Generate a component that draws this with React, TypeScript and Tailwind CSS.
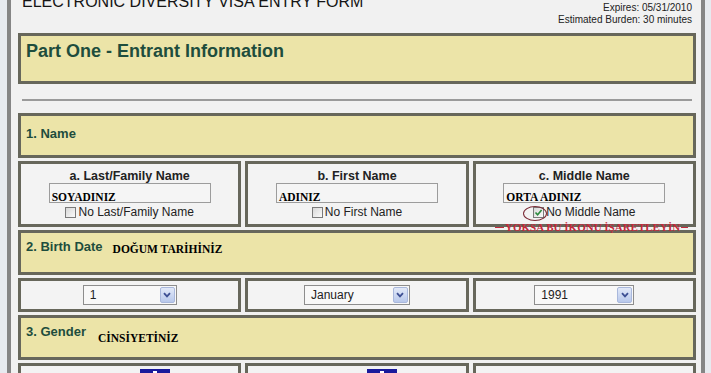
import React from "react";

const sans = "font-['Liberation_Sans',Arial,sans-serif]";
const serif = "font-['Liberation_Serif','Times_New_Roman',serif]";
const band = "border-[3px] border-[#67675b] bg-[#ece4a8]";
const cell = "border-[3px] border-[#67675b] bg-[#f3f3f3]";
const label = "text-[13px] font-bold leading-[16px] text-[#1e4d3d]";

function Check({ text, checked }: { text: string; checked?: boolean }) {
  return (
    <div className="flex items-center gap-[2px] h-[13px]">
      <span className="relative w-[11px] h-[11px] border border-[#7a7a7a] bg-gradient-to-br from-[#d8d8d8] to-[#fafafa] flex items-center justify-center">
        {checked && (
          <svg width="9" height="9" viewBox="0 0 9 9">
            <path d="M1.5 4.5 L3.6 6.8 L7.6 2" stroke="#2b8a3e" strokeWidth="1.6" fill="none" />
          </svg>
        )}
        {checked && (
          <span className="absolute left-[-11px] top-[-2px] w-[24px] h-[15px] rounded-[50%] border border-[#7a2a35]" />
        )}
      </span>
      <span className="text-[12px] leading-[13px] text-[#222]">{text}</span>
    </div>
  );
}

function NameCell({
  title,
  value,
  check,
  checked,
}: {
  title: string;
  value: string;
  check: string;
  checked?: boolean;
}) {
  return (
    <div className={`${cell} h-[66px] flex flex-col items-center pt-[5px]`}>
      <div className="text-[12.5px] font-bold leading-[14px] text-[#222]">{title}</div>
      <div className="w-[162px] h-[20px] border border-[#9c9c9c] bg-[#f5f5f5] flex items-end pl-[2px]">
        <span className={`${serif} text-[11.5px] font-bold leading-[10px] text-black`}>{value}</span>
      </div>
      <div className="mt-[3px]">
        <Check text={check} checked={checked} />
      </div>
    </div>
  );
}

function Select({ value, width }: { value: string; width: string }) {
  return (
    <div className={`${width} h-[20px] border border-[#8d8d8d] bg-[#f8f8f8] flex items-center justify-between pl-[6px] pr-[1px]`}>
      <span className="text-[12px] leading-[14px] text-[#222]">{value}</span>
      <div className="w-[15px] h-[16px] rounded-[2px] border border-[#a9b8dc] bg-gradient-to-b from-[#e2e9f8] to-[#b8c8eb] flex items-center justify-center">
        <svg width="8" height="6" viewBox="0 0 8 6">
          <path d="M1 1.2 L4 4.4 L7 1.2" stroke="#3d4f93" strokeWidth="1.8" fill="none" />
        </svg>
      </div>
    </div>
  );
}

function SelectCell({ value, width }: { value: string; width: string }) {
  return (
    <div className={`${cell} h-[34px] flex justify-center pt-[4px]`}>
      <Select value={value} width={width} />
    </div>
  );
}

function GenderCell({ icon }: { icon?: boolean }) {
  return (
    <div className={`${cell} h-[40px] flex justify-center pt-[3px]`}>
      {icon && (
        <div className="ml-[50px] w-[30px] h-[24px] bg-[#1a1a9c] flex justify-center pt-[2px]">
          <span className="w-[4px] h-[3px] bg-white" />
        </div>
      )}
    </div>
  );
}

export default function App() {
  return (
    <div className={`${sans} w-[711px] h-[373px] overflow-hidden flex items-start bg-[#f1f1f1]`}>
      <div className="w-[7px] h-full bg-[#e7eaef]" />
      <div className="w-[4px] h-full bg-[#858585]" />

      <div className="flex-1 min-w-0 pl-[7px] pr-[5px]">
        {/* Header */}
        <div className="h-[33px] flex justify-between items-start">
          <div className="ml-[4px] -mt-[6px] text-[16px] leading-[16px] text-[#151515]">
            ELECTRONIC DIVERSITY VISA ENTRY FORM
          </div>
          <div className="mr-[4px] pt-[2px] text-right text-[10px] leading-[12px] text-[#222]">
            <div>Expires: 05/31/2010</div>
            <div>Estimated Burden: 30 minutes</div>
          </div>
        </div>

        <div className={`${band} h-[51px] pl-[5px] pt-[4px]`}>
          <div className="text-[18px] font-bold leading-[22px] text-[#1e4d3d]">
            Part One - Entrant Information
          </div>
        </div>

        <div className="mt-[15px] mx-[4px] h-[2px] bg-[#9a9a9a]" />

        <div className="mt-[12px] flex flex-col gap-[3px]">
          <div className={`${band} h-[45px] pl-[5px] pt-[5px]`}>
            <span className={label}>1. Name</span>
          </div>

          <div className="relative grid grid-cols-3 gap-[4px]">
            <NameCell title="a. Last/Family Name" value="SOYADINIZ" check="No Last/Family Name" />
            <NameCell title="b. First Name" value="ADINIZ" check="No First Name" />
            <NameCell title="c. Middle Name" value="ORTA ADINIZ" check="No Middle Name" checked />
            <div className="absolute left-[477px] top-[60px] flex items-center">
              <span className="w-[9px] h-[1px] bg-[#c42a3c]" />
              <span className={`${serif} px-[1px] text-[11px] font-bold leading-[12px] text-[#c42a3c]`}>
                YOKSA BU İKONU İŞARETLEYİN
              </span>
              <span className="w-[7px] h-[1px] bg-[#c42a3c]" />
            </div>
          </div>

          <div className={`${band} h-[45px] pl-[5px] pt-[6px] flex items-start`}>
            <span className={label}>2. Birth Date</span>
            <span className={`${serif} ml-[10px] mt-[2px] text-[11.5px] font-bold leading-[16px] text-black`}>
              DOĞUM TARİHİNİZ
            </span>
          </div>

          <div className="grid grid-cols-3 gap-[4px]">
            <SelectCell value="1" width="w-[94px]" />
            <SelectCell value="January" width="w-[106px]" />
            <SelectCell value="1991" width="w-[100px]" />
          </div>

          <div className={`${band} h-[45px] pl-[5px] pt-[6px] flex items-start`}>
            <span className={label}>3. Gender</span>
            <span className={`${serif} ml-[12px] mt-[6px] text-[11.5px] font-bold leading-[16px] text-black`}>
              CİNSİYETİNİZ
            </span>
          </div>

          <div className="grid grid-cols-3 gap-[4px]">
            <GenderCell icon />
            <GenderCell icon />
            <GenderCell />
          </div>
        </div>
      </div>

      <div className="w-[4px] h-full bg-[#858585]" />
      <div className="w-[6px] h-full bg-[#e7eaef]" />
    </div>
  );
}
